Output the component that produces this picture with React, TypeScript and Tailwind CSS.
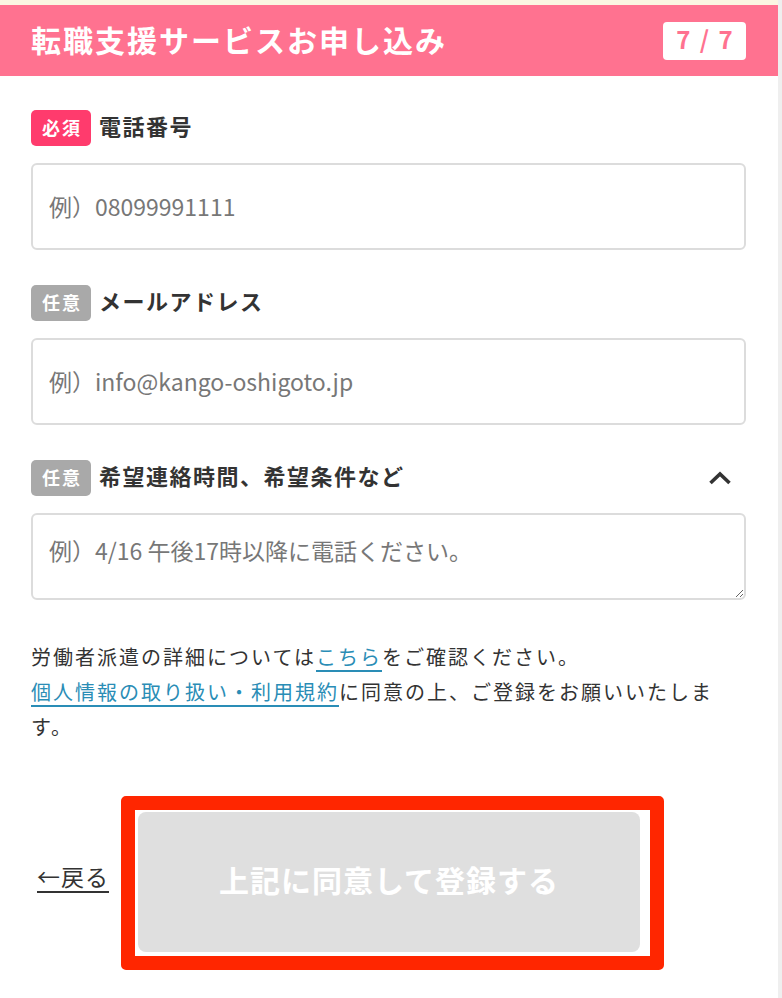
import React from "react";

const FONT = { fontFamily: '"Noto Sans CJK JP", "Noto Sans", sans-serif' };

function Badge({ required }: { required?: boolean }) {
  return (
    <span
      className={
        "flex h-[36px] w-[60px] shrink-0 items-center justify-center rounded-[5px] pb-[2px] pl-[2px] text-[18px] font-bold tracking-[2px] text-white " +
        (required ? "bg-[#ff3b6d]" : "bg-[#a9a9a9]")
      }
    >
      {required ? "必須" : "任意"}
    </span>
  );
}

function Label({ required, text, chevron }: { required?: boolean; text: string; chevron?: boolean }) {
  return (
    <div className="flex h-[36px] items-center justify-between">
      <div className="flex items-center gap-[8px]">
        <Badge required={required} />
        <span className="pb-[7px] text-[22px] font-bold leading-none tracking-[1.5px] text-[#333]">{text}</span>
      </div>
      {chevron && (
        <svg width="24" height="16" viewBox="0 0 24 16" className="mr-[14px]">
          <polyline points="2.5,13 12,4 21.5,13" fill="none" stroke="#333" strokeWidth="3.6" />
        </svg>
      )}
    </div>
  );
}

export default function App() {
  return (
    <div className="flex min-h-[998px] w-[782px] bg-white" style={FONT}>
      <div className="w-[778px]">
        <div className="h-[5px] bg-[#fbf6e2]" />
        <header className="flex h-[71px] items-center justify-between bg-[#ff7290] pl-[31px] pr-[32px]">
          <h1 className="pb-[4px] text-[30px] font-bold leading-none tracking-[2px] text-white">転職支援サービスお申し込み</h1>
          <div className="flex h-[38px] w-[83px] items-center justify-center rounded-[4px] bg-white pb-[3px] pl-[2px] text-[24px] font-bold tracking-[2px] text-[#ff7290]">
            7 / 7
          </div>
        </header>
        <main className="pl-[31px] pr-[32px] pt-[34px]">
          <div className="flex flex-col">
            <Label required text="電話番号" />
            <input
              className="mt-[17px] h-[87px] w-full rounded-[6px] border-2 border-[#dcdcdc] bg-white pb-[2px] pl-[16px] text-[23px] text-[#333] outline-none placeholder:text-[#777]"
              placeholder="例）08099991111"
            />
          </div>
          <div className="mt-[35px] flex flex-col">
            <Label text="メールアドレス" />
            <input
              className="mt-[17px] h-[87px] w-full rounded-[6px] border-2 border-[#dcdcdc] bg-white pb-[2px] pl-[16px] text-[23px] text-[#333] outline-none placeholder:text-[#777]"
              placeholder="例）info@kango-oshigoto.jp"
            />
          </div>
          <div className="mt-[35px] flex flex-col">
            <Label text="希望連絡時間、希望条件など" chevron />
            <textarea
              className="mt-[17px] block h-[87px] w-full rounded-[6px] border-2 border-[#dcdcdc] bg-white pb-[8px] pl-[16px] pt-[18px] text-[23px] leading-[34px] text-[#333] outline-none placeholder:text-[#777]"
              placeholder="例）4/16 午後17時以降に電話ください。"
            />
          </div>
          <p className="mt-[39px] w-[700px] text-[20px] leading-[35px] tracking-[2px] text-[#333]">
            労働者派遣の詳細については
            <a className="text-[#2a8db6] underline decoration-2 underline-offset-[5px]">こちら</a>
            をご確認ください。
            <br />
            <a className="text-[#2a8db6] underline decoration-2 underline-offset-[5px]">個人情報の取り扱い・利用規約</a>
            に同意の上、ご登録をお願いいたします。
          </p>
          <div className="mt-[52px] flex items-center pl-[6px]">
            <a className="mb-[14px] mr-[12px] w-[72px] text-[23px] leading-none tracking-[1px] text-[#333] underline decoration-2 underline-offset-[5px]">←戻る</a>
            <div className="rounded-[5px] border-[14px] border-[#ff2600] bg-white pb-[4px] pl-[3px] pr-[10px] pt-[2px]">
              <div className="flex h-[140px] w-[502px] items-center justify-center rounded-[8px] bg-[#dfdfdf] pb-[6px] text-[30px] font-bold tracking-[1px] text-white">
                上記に同意して登録する
              </div>
            </div>
          </div>
        </main>
      </div>
      <div className="w-[4px] bg-[#efefef]" />
    </div>
  );
}
